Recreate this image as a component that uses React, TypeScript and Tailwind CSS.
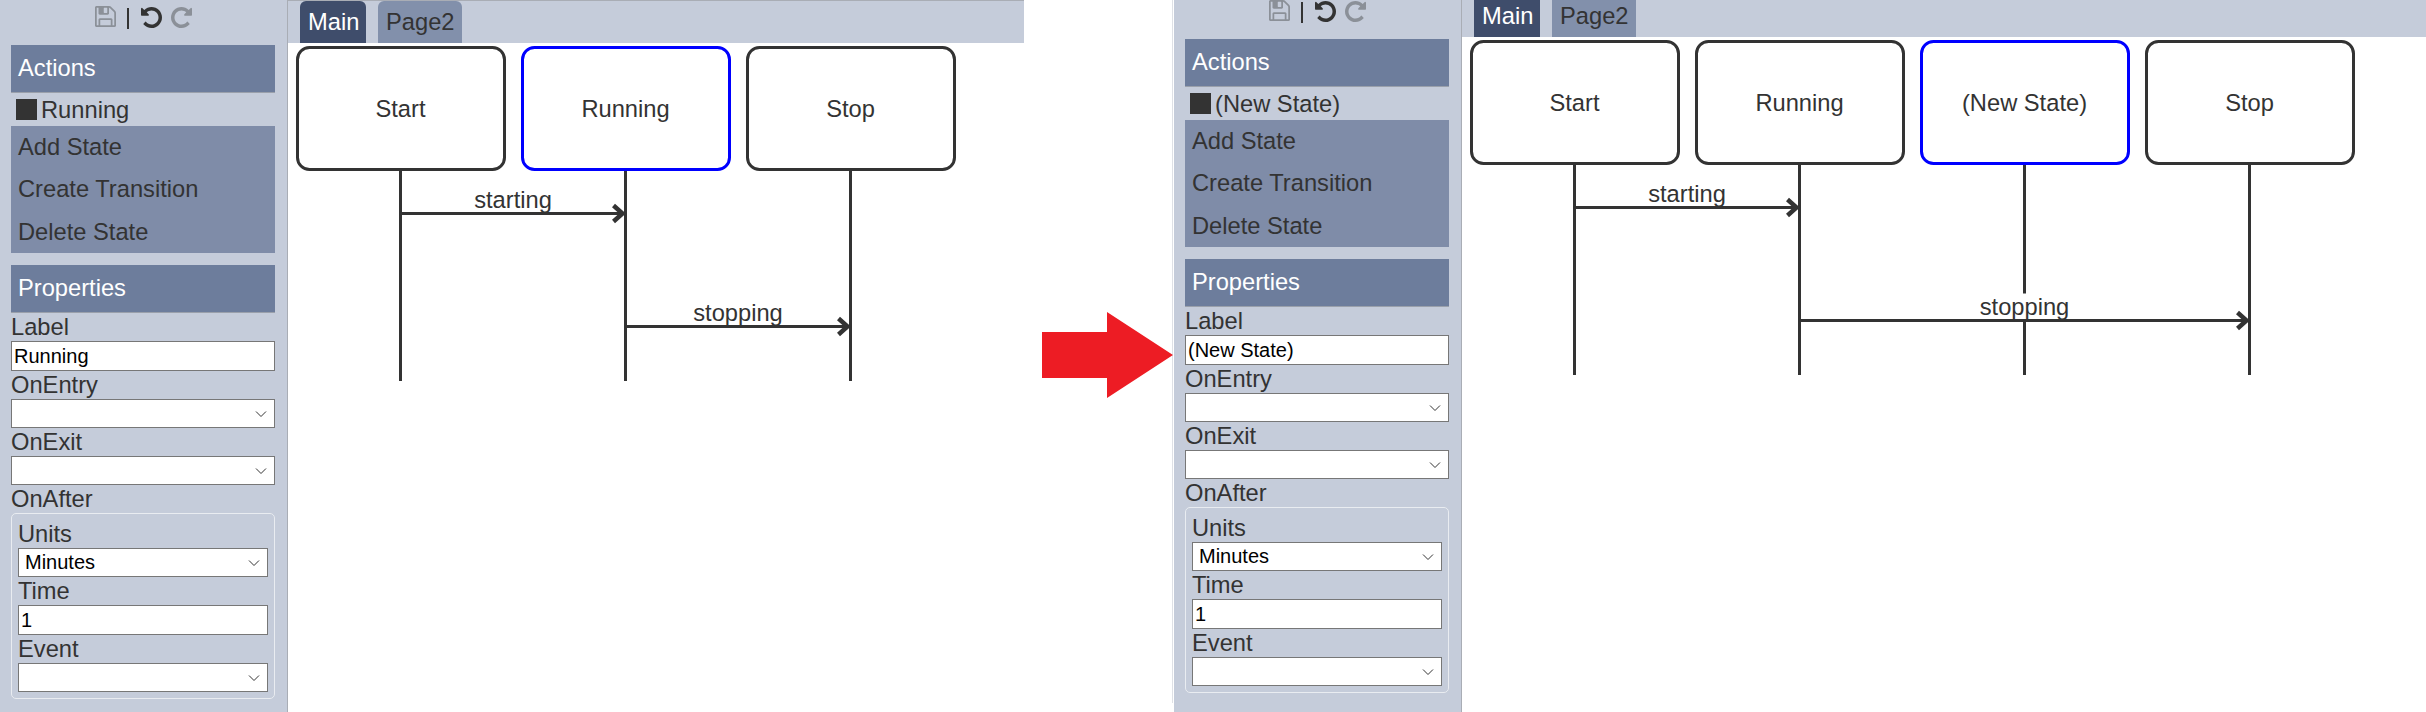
const font = 'font-["Liberation_Sans",Arial,sans-serif]';

const saveIcon =
  'M512 1536h768v-384h-768v384zm896 0h128v-896q0-14-10-38.5t-20-34.5l-281-281q-10-10-34-20t-39-10v416q0 40-28 68t-68 28h-576q-40 0-68-28t-28-68v-416h-128v1280h128v-416q0-40 28-68t68-28h832q40 0 68 28t28 68v416zm-384-928v-320q0-13-9.5-22.5t-22.5-9.5h-192q-13 0-22.5 9.5t-9.5 22.5v320q0 13 9.5 22.5t22.5 9.5h192q13 0 22.5-9.5t9.5-22.5zm640 32v928q0 40-28 68t-68 28h-1344q-40 0-68-28t-28-68v-1344q0-40 28-68t68-28h928q40 0 88 20t76 48l280 280q28 28 48 76t20 88z';
const undoIcon =
  'M1664 896q0 156-61 298t-164 245-245 164-298 61q-172 0-327-72.5t-264-204.5q-7-10-6.5-22.5t8.5-20.5l137-138q10-9 25-9 16 2 23 12 73 95 179 147t225 52q104 0 198.5-40.5t163.5-109.5 109.5-163.5 40.5-198.5-40.5-198.5-109.5-163.5-163.5-109.5-198.5-40.5q-98 0-188 35.5t-160 101.5l137 138q31 30 14 69-17 40-59 40h-448q-26 0-45-19t-19-45v-448q0-42 40-59 39-17 69 14l130 129q107-101 244.5-156.5t284.5-55.5q156 0 298 61t245 164 164 245 61 298z';

function ToolIcon({ d, className }: { d: string; className: string }) {
  return (
    <svg className={className} width="21" height="21" viewBox="128 128 1536 1536" fill="currentColor">
      <path d={d} />
    </svg>
  );
}

function Chevron() {
  return (
    <svg className="absolute right-[7px] top-[10px]" width="12" height="8" viewBox="0 0 12 8" fill="none">
      <path d="M1 1.5 L6 6.5 L11 1.5" stroke="#333" strokeWidth="1" />
    </svg>
  );
}

function Field({ label, children }: { label: string; children: React.ReactNode }) {
  return (
    <>
      <div className="h-[28px] leading-[28px] whitespace-nowrap">{label}</div>
      {children}
    </>
  );
}

function TextBox({ value }: { value: string }) {
  return (
    <input
      readOnly
      value={value}
      className="block w-full h-[30px] border border-[#777] bg-white pl-[2px] text-[20px] text-black outline-none"
    />
  );
}

function Select({ value }: { value?: string }) {
  return (
    <div className="relative h-[29px] border border-[#777] bg-white">
      <select
        value={value ?? ''}
        onChange={() => {}}
        className="block w-full h-full appearance-none bg-transparent pl-[6px] text-[20px] leading-[27px] text-black outline-none"
      >
        <option value=""></option>
        <option value="Minutes">Minutes</option>
      </select>
      <Chevron />
    </div>
  );
}

function Sidebar({ selected }: { selected: string }) {
  return (
    <div className="w-[288px] shrink-0 h-full bg-[#c5ccda] border-r border-[#a9adb5] pl-[11px] pr-[12px] text-[#333]">
      <div className="h-[45px] flex items-start pl-[84px]">
        <ToolIcon d={saveIcon} className="mt-[6px] text-[#8b9098]" />
        <div className="w-[2px] h-[21px] bg-[#333] mt-[8px] ml-[11px] mr-[12px]" />
        <ToolIcon d={undoIcon} className="mt-[7px] text-[#333]" />
        <ToolIcon d={undoIcon} className="mt-[7px] ml-[9px] -scale-x-100 text-[#8b9098]" />
      </div>
      <div className="h-[48px] bg-[#6d7d9c] border-b border-[#9aa0ab] pl-[7px] leading-[47px] text-white">Actions</div>
      <div className="h-[33px] flex items-center pl-[5px] gap-[4px] whitespace-nowrap">
        <div className="w-[21px] h-[21px] bg-[#333]" />
        <span className="mt-[2px]">{selected}</span>
      </div>
      <div className="h-[127px] bg-[#7f8ca8] pl-[7px] flex flex-col">
        <div className="h-[42px] leading-[42px]">Add State</div>
        <div className="h-[43px] leading-[43px]">Create Transition</div>
        <div className="h-[42px] leading-[42px]">Delete State</div>
      </div>
      <div className="mt-[12px] h-[48px] bg-[#6d7d9c] border-b border-[#9aa0ab] pl-[7px] leading-[47px] text-white">Properties</div>
      <Field label="Label">
        <TextBox value={selected} />
      </Field>
      <Field label="OnEntry">
        <Select />
      </Field>
      <Field label="OnExit">
        <Select />
      </Field>
      <Field label="OnAfter">
        <div className="border border-[#e9ecf1] rounded-[5px] p-[6px]">
          <Field label="Units">
            <Select value="Minutes" />
          </Field>
          <Field label="Time">
            <TextBox value="1" />
          </Field>
          <Field label="Event">
            <Select />
          </Field>
        </div>
      </Field>
    </div>
  );
}

function Tabs() {
  return (
    <div className="h-[43px] bg-[#c5ccda] border-t border-[#a9adb5] flex items-end gap-[12px] pl-[12px]">
      <div className="w-[66px] h-[42px] pl-[8px] leading-[42px] rounded-t-[6px] bg-[#3f4d6b] text-white">Main</div>
      <div className="w-[84px] h-[42px] pl-[8px] leading-[42px] rounded-t-[6px] bg-[#8290ab] text-[#333]">Page2</div>
    </div>
  );
}

interface Edge {
  label: string;
  from: number;
  to: number;
  y: number;
}

function Diagram({ states, active, edges }: { states: string[]; active: string; edges: Edge[] }) {
  const lifeline = (i: number) => 112.5 + 225 * i;
  return (
    <svg className="block" width="964" height="600" fill="none">
      {states.map((s, i) => (
        <g key={s}>
          <line x1={lifeline(i)} x2={lifeline(i)} y1={128} y2={338} stroke="#333" strokeWidth="3" />
          <rect
            x={9.5 + 225 * i}
            y={4.5}
            width={207}
            height={122}
            rx={12}
            fill="#fff"
            stroke={s === active ? '#0000ff' : '#333'}
            strokeWidth="3"
          />
          <text x={112.5 + 225 * i} y={74} textAnchor="middle" fill="#333" fontSize="23.7">
            {s}
          </text>
        </g>
      ))}
      {edges.map((e) => {
        const x1 = lifeline(e.from);
        const x2 = lifeline(e.to);
        const mid = (x1 + x2) / 2;
        return (
          <g key={e.label}>
            <rect x={mid - 45} y={e.y - 27} width={90} height={27} fill="#fff" />
            <line x1={x1} x2={x2 - 1} y1={e.y} y2={e.y} stroke="#333" strokeWidth="3" />
            <path d={`M${x2 - 12} ${e.y - 8} L${x2 - 3} ${e.y} L${x2 - 12} ${e.y + 8}`} stroke="#333" strokeWidth="4.5" />
            <text x={mid} y={e.y - 6} textAnchor="middle" fill="#333" fontSize="23.7">
              {e.label}
            </text>
          </g>
        );
      })}
    </svg>
  );
}

function Screen({ selected, states, edges, className }: { selected: string; states: string[]; edges: Edge[]; className: string }) {
  return (
    <div className={`flex ${className}`}>
      <Sidebar selected={selected} />
      <div className="flex-1 min-w-0 overflow-hidden">
        <Tabs />
        <Diagram states={states} active={selected} edges={edges} />
      </div>
    </div>
  );
}

export default function App() {
  return (
    <div className={`flex w-[2426px] h-[712px] overflow-hidden bg-white text-[23.7px] ${font}`}>
      <Screen
        className="w-[1024px] h-[712px] shrink-0"
        selected="Running"
        states={['Start', 'Running', 'Stop']}
        edges={[
          { label: 'starting', from: 0, to: 1, y: 170.5 },
          { label: 'stopping', from: 1, to: 2, y: 283.5 },
        ]}
      />
      <div className="w-[149px] h-[703px] mr-[1px] shrink-0 pl-[18px] pt-[312px] border-r border-[#dfe1e6]">
        <svg className="overflow-visible" width="131" height="86" viewBox="0 0 131 86">
          <polygon points="0,20 65,20 65,0 131,43 65,86 65,66 0,66" fill="#ed1c24" />
        </svg>
      </div>
      <Screen
        className="w-[1252px] h-[718px] shrink-0 -mt-[6px]"
        selected="(New State)"
        states={['Start', 'Running', '(New State)', 'Stop']}
        edges={[
          { label: 'starting', from: 0, to: 1, y: 170.5 },
          { label: 'stopping', from: 1, to: 3, y: 283.5 },
        ]}
      />
    </div>
  );
}
